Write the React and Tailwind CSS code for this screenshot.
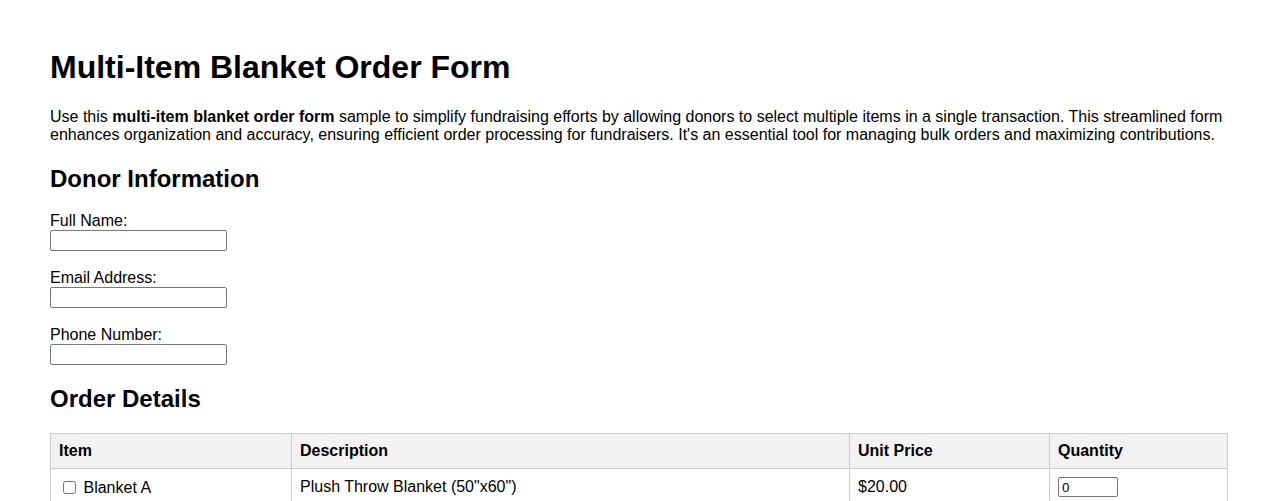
import { useState } from 'react'

const items = [
  { id: 'a', name: 'Blanket A', description: 'Plush Throw Blanket (50"x60")', price: 20 },
  { id: 'b', name: 'Blanket B', description: 'Fleece Blanket (60"x80")', price: 25 },
  { id: 'c', name: 'Blanket C', description: 'Weighted Blanket (48"x72")', price: 45 },
]

const Field = ({ label, type = 'text' }) => (
  <div className="mb-[18px]">
    <label className="block">{label}</label>
    <input
      type={type}
      className="block w-[177px] h-[21px] border border-[#767676] rounded-[2px] px-[2px] text-[13px] bg-white"
    />
  </div>
)

export default function App() {
  const [qty, setQty] = useState({ a: 0, b: 0, c: 0 })

  return (
    <div className="font-['Liberation_Sans',Arial,sans-serif] text-[16px] text-black leading-[normal] px-[50px] pt-[49px] pb-10 bg-white">
      <h1 className="text-[32px] font-bold mb-[22px]">Multi-Item Blanket Order Form</h1>
      <p className="mb-[21px]">
        Use this <strong className="font-bold">multi-item blanket order form</strong> sample to simplify fundraising efforts by allowing donors to select multiple items in a single transaction. This streamlined form enhances organization and accuracy, ensuring efficient order processing for fundraisers. It's an essential tool for managing bulk orders and maximizing contributions.
      </p>

      <h2 className="text-[24px] font-bold mb-[19px]">Donor Information</h2>
      <Field label="Full Name:" />
      <Field label="Email Address:" type="email" />
      <Field label="Phone Number:" type="tel" />

      <h2 className="text-[24px] font-bold mt-[20px] mb-[20px]">Order Details</h2>
      <table className="w-full border-collapse">
        <thead>
          <tr className="bg-[#f2f2f2]">
            <th className="w-[241px] border border-[#cccccc] p-2 text-left font-bold">Item</th>
            <th className="w-[558px] border border-[#cccccc] p-2 text-left font-bold">Description</th>
            <th className="w-[200px] border border-[#cccccc] p-2 text-left font-bold">Unit Price</th>
            <th className="border border-[#cccccc] p-2 text-left font-bold">Quantity</th>
          </tr>
        </thead>
        <tbody>
          {items.map((item) => (
            <tr key={item.id}>
              <td className="border border-[#cccccc] p-2 align-middle">
                <input type="checkbox" className="mt-[3px] mr-[3px] mb-[3px] ml-[4px] w-[13px] h-[13px] align-[-1px]" /> {item.name}
              </td>
              <td className="border border-[#cccccc] p-2 align-middle">{item.description}</td>
              <td className="border border-[#cccccc] p-2 align-middle">${item.price.toFixed(2)}</td>
              <td className="border border-[#cccccc] p-2 align-middle">
                <input
                  type="number"
                  min="0"
                  value={qty[item.id]}
                  onChange={(e) => setQty({ ...qty, [item.id]: e.target.value })}
                  className="w-[60px] h-[20px] border border-[#767676] rounded-[2px] px-[3px] text-[13.33px] align-top bg-white"
                />
              </td>
            </tr>
          ))}
        </tbody>
      </table>
    </div>
  )
}
